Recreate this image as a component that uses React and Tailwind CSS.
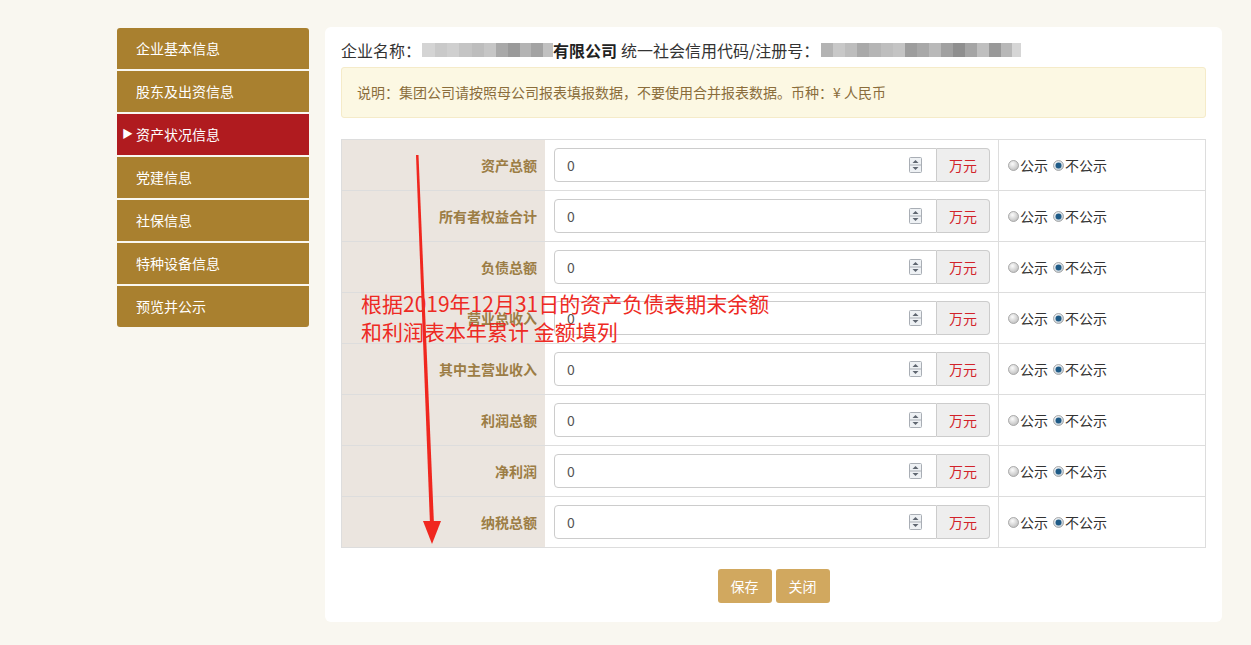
import React from 'react';

const menu = ['企业基本信息', '股东及出资信息', '资产状况信息', '党建信息', '社保信息', '特种设备信息', '预览并公示'];

const rows = ['资产总额', '所有者权益合计', '负债总额', '营业总收入', '其中主营业收入', '利润总额', '净利润', '纳税总额'];

const blurA = [
  ['#d4d4d4', 13], ['#c9c9c9', 12], ['#cfcfcf', 12], ['#c4c4c4', 13], ['#bdbdbd', 12], ['#c6c6c6', 12],
  ['#a9a9a9', 12], ['#9a9a9a', 12], ['#b4b4b4', 11], ['#a3a3a3', 12], ['#c1c1c1', 10],
];

const blurB = [
  ['#b3b3b3', 12], ['#c8c8c8', 12], ['#bdbdbd', 12], ['#a9a9a9', 12], ['#b5b5b5', 12], ['#bebebe', 12],
  ['#c4c4c4', 12], ['#9d9d9d', 12], ['#a8a8a8', 12], ['#b9b9b9', 12], ['#a1a1a1', 12], ['#8f8f8f', 12],
  ['#a5a5a5', 12], ['#bfbfbf', 12], ['#999999', 12], ['#b8b8b8', 11], ['#d6d6d6', 9],
];

function Blur({ blocks }) {
  return (
    <span className="inline-flex h-[16px] items-center blur-[0.6px]">
      {blocks.map(([c, w], i) => (
        <span key={i} className="h-[14px]" style={{ backgroundColor: c, width: w }} />
      ))}
    </span>
  );
}

function Spinner() {
  return (
    <svg width="13" height="16" viewBox="0 0 13 16" className="shrink-0">
      <rect x="0.5" y="0.5" width="12" height="15" rx="1" fill="#eef1f4" stroke="#a9aeb5" />
      <line x1="1" y1="8" x2="12" y2="8" stroke="#a9aeb5" />
      <polygon points="3.5,6 9.5,6 6.5,3" fill="#5f6670" />
      <polygon points="3.5,10 9.5,10 6.5,13" fill="#5f6670" />
    </svg>
  );
}

function Radio({ checked }) {
  return (
    <svg width="11" height="11" viewBox="0 0 11 11" className="shrink-0">
      <defs>
        <radialGradient id={checked ? 'rc' : 'ru'} cx="0.4" cy="0.35" r="0.7">
          <stop offset="0" stopColor={checked ? '#ffffff' : '#fbfbfb'} />
          <stop offset="1" stopColor={checked ? '#b9c6d0' : '#bdbdbd'} />
        </radialGradient>
      </defs>
      <circle cx="5.5" cy="5.5" r="5" fill={`url(#${checked ? 'rc' : 'ru'})`} stroke="#9a9a9a" strokeWidth="0.8" />
      {checked && <circle cx="5.5" cy="5.5" r="3" fill="#1e5a86" />}
    </svg>
  );
}

export default function App() {
  return (
    <div className="min-h-[645px] w-full bg-[#f9f7f0] font-['Noto_Sans_CJK_SC','Liberation_Sans',sans-serif]">
      <div className="flex gap-4 pl-[117px] pt-[27px]">
        {/* sidebar */}
        <div className="mt-px w-[192px] shrink-0">
          {menu.map((m, i) => {
            const active = i === 2;
            return (
              <div
                key={m}
                className={`mb-[2px] flex h-[41px] items-center pl-[19px] text-[14px] text-white ${
                  active ? 'relative bg-[#b01b1f]' : 'bg-[#a9802f]'
                } ${i === 0 ? 'rounded-t-[3px]' : ''} ${i === menu.length - 1 ? 'rounded-b-[3px]' : ''}`}
              >
                {active && <span className="absolute left-[5px] top-[11px] text-[11px]">▶</span>}
                {m}
              </div>
            );
          })}
        </div>

        {/* main panel */}
        <div className="relative w-[897px] rounded-md bg-white px-4 pb-[19px] pt-[11px]">
          <div className="flex h-[24px] items-center whitespace-nowrap text-[16px] text-[#333]">
            <span>企业名称：</span>
            <span className="ml-px">
              <Blur blocks={blurA} />
            </span>
            <span className="font-bold text-[#222]">有限公司</span>
            <span className="ml-[4px]">统一社会信用代码/注册号：</span>
            <span className="ml-[2px]">
              <Blur blocks={blurB} />
            </span>
          </div>

          <div className="mt-[5px] flex h-[51px] items-center rounded-[3px] border border-[#f5ebc9] bg-[#fcf8e3] pl-[15px] text-[14px] text-[#8a6d3b]">
            说明：集团公司请按照母公司报表填报数据，不要使用合并报表数据。币种：¥ 人民币
          </div>

          <div className="mt-[21px] border border-[#dddddd]">
            {rows.map((r, i) => (
              <div key={r} className={`flex ${i > 0 ? 'h-[51px] border-t border-[#dddddd]' : 'h-[50px]'}`}>
                <div className="flex w-[203px] shrink-0 items-center justify-end bg-[#ebe5df] pr-[8px] text-[14px] font-bold text-[#9c7d45]">
                  {r}
                </div>
                <div className="flex w-[454px] shrink-0 items-center border-r border-[#dddddd] pl-[9px] pr-[8px]">
                  <div className="flex h-[34px] w-[384px] items-center rounded-l-[4px] border border-[#cccccc] pl-[12px] pr-[14px] text-[14px] text-[#555]">
                    <span className="flex-1">0</span>
                    <Spinner />
                  </div>
                  <div className="flex h-[34px] w-[53px] items-center justify-center rounded-r-[4px] border border-l-0 border-[#cccccc] bg-[#eeeeee] text-[14px] text-[#d2232a]">
                    万元
                  </div>
                </div>
                <div className="flex flex-1 items-center pl-[9px] text-[14px] text-[#333]">
                  <Radio />
                  <span className="ml-px">公示</span>
                  <span className="ml-[5px]">
                    <Radio checked />
                  </span>
                  <span className="ml-px">不公示</span>
                </div>
              </div>
            ))}
          </div>

          <div className="mt-[21px] flex justify-center gap-1">
            <button type="button" className="h-[34px] w-[54px] rounded-[3px] bg-[#d1a85f] text-[14px] text-white">
              保存
            </button>
            <button type="button" className="h-[34px] w-[54px] rounded-[3px] bg-[#d1a85f] text-[14px] text-white">
              关闭
            </button>
          </div>

          {/* red annotation */}
          <svg width="45" height="410" viewBox="0 0 45 410" className="absolute left-[80px] top-[118px]">
            <polygon points="11,10 13.5,10 29,380 25,380" fill="#f0271f" />
            <polygon points="18,376 36,376 27,399" fill="#f0271f" />
          </svg>
          <div className="absolute left-[36px] top-[262px] text-[21px] leading-[28px] text-[#ee2a24]">
            <div>根据2019年12月31日的资产负债表期末余额</div>
            <div>和利润表本年累计 金额填列</div>
          </div>
        </div>
      </div>
    </div>
  );
}
